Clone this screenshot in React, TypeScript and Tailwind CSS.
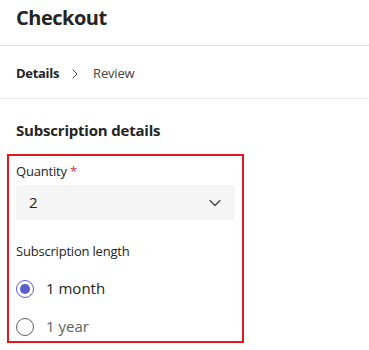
import { ChevronDown, ChevronRight } from 'lucide-react'

export default function App() {
  return (
    <div className="w-[369px] h-[350px] bg-white overflow-hidden text-[#242424]" style={{ fontFamily: '"Open Sans", sans-serif' }}>
      <div className="h-[46px] px-4 pb-[9px] flex items-center border-b border-[#e0e0e0]">
        <h1 className="text-[20px] font-bold tracking-[-0.5px]">Checkout</h1>
      </div>
      <div className="h-[53px] px-4 pt-[4px] flex items-center border-b border-[#ebebeb] text-[13px]">
        <span className="font-bold tracking-[-0.3px]">Details</span>
        <ChevronRight className="w-4 h-4 ml-[8px] text-[#424242]" strokeWidth={1.5} />
        <span className="ml-[10px] text-[#424242] tracking-[-0.2px]">Review</span>
      </div>
      <h2 className="px-4 pt-[20px] text-[15px] font-bold tracking-[-0.2px]">Subscription details</h2>
      <div className="ml-[7px] mt-[12px] w-[237px] h-[189px] border-2 border-[#e3171e] px-[7px] pt-[6px]">
        <div className="text-[13px] text-[#242424] tracking-[-0.2px]">
          Quantity <span className="text-[#c4314b]">*</span>
        </div>
        <div className="mt-[4px] h-[35px] rounded bg-[#f5f5f5] flex items-center justify-between pl-[13px] pr-[10px]">
          <span className="text-[15px]">2</span>
          <ChevronDown className="w-5 h-5 text-[#424242]" strokeWidth={1.5} />
        </div>
        <div className="mt-[22px] text-[13px] tracking-[-0.2px]">Subscription length</div>
        <div className="mt-[17px] flex items-center h-[20px]">
          <span className="w-[18px] h-[18px] rounded-full border border-[#5b5fc7] flex items-center justify-center">
            <span className="w-[10px] h-[10px] rounded-full bg-[#5b5fc7]" />
          </span>
          <span className="ml-[12px] text-[15px]">1 month</span>
        </div>
        <div className="mt-[18px] flex items-center h-[20px]">
          <span className="w-[18px] h-[18px] rounded-full border border-[#616161]" />
          <span className="ml-[12px] text-[15px] text-[#616161]">1 year</span>
        </div>
      </div>
    </div>
  )
}
